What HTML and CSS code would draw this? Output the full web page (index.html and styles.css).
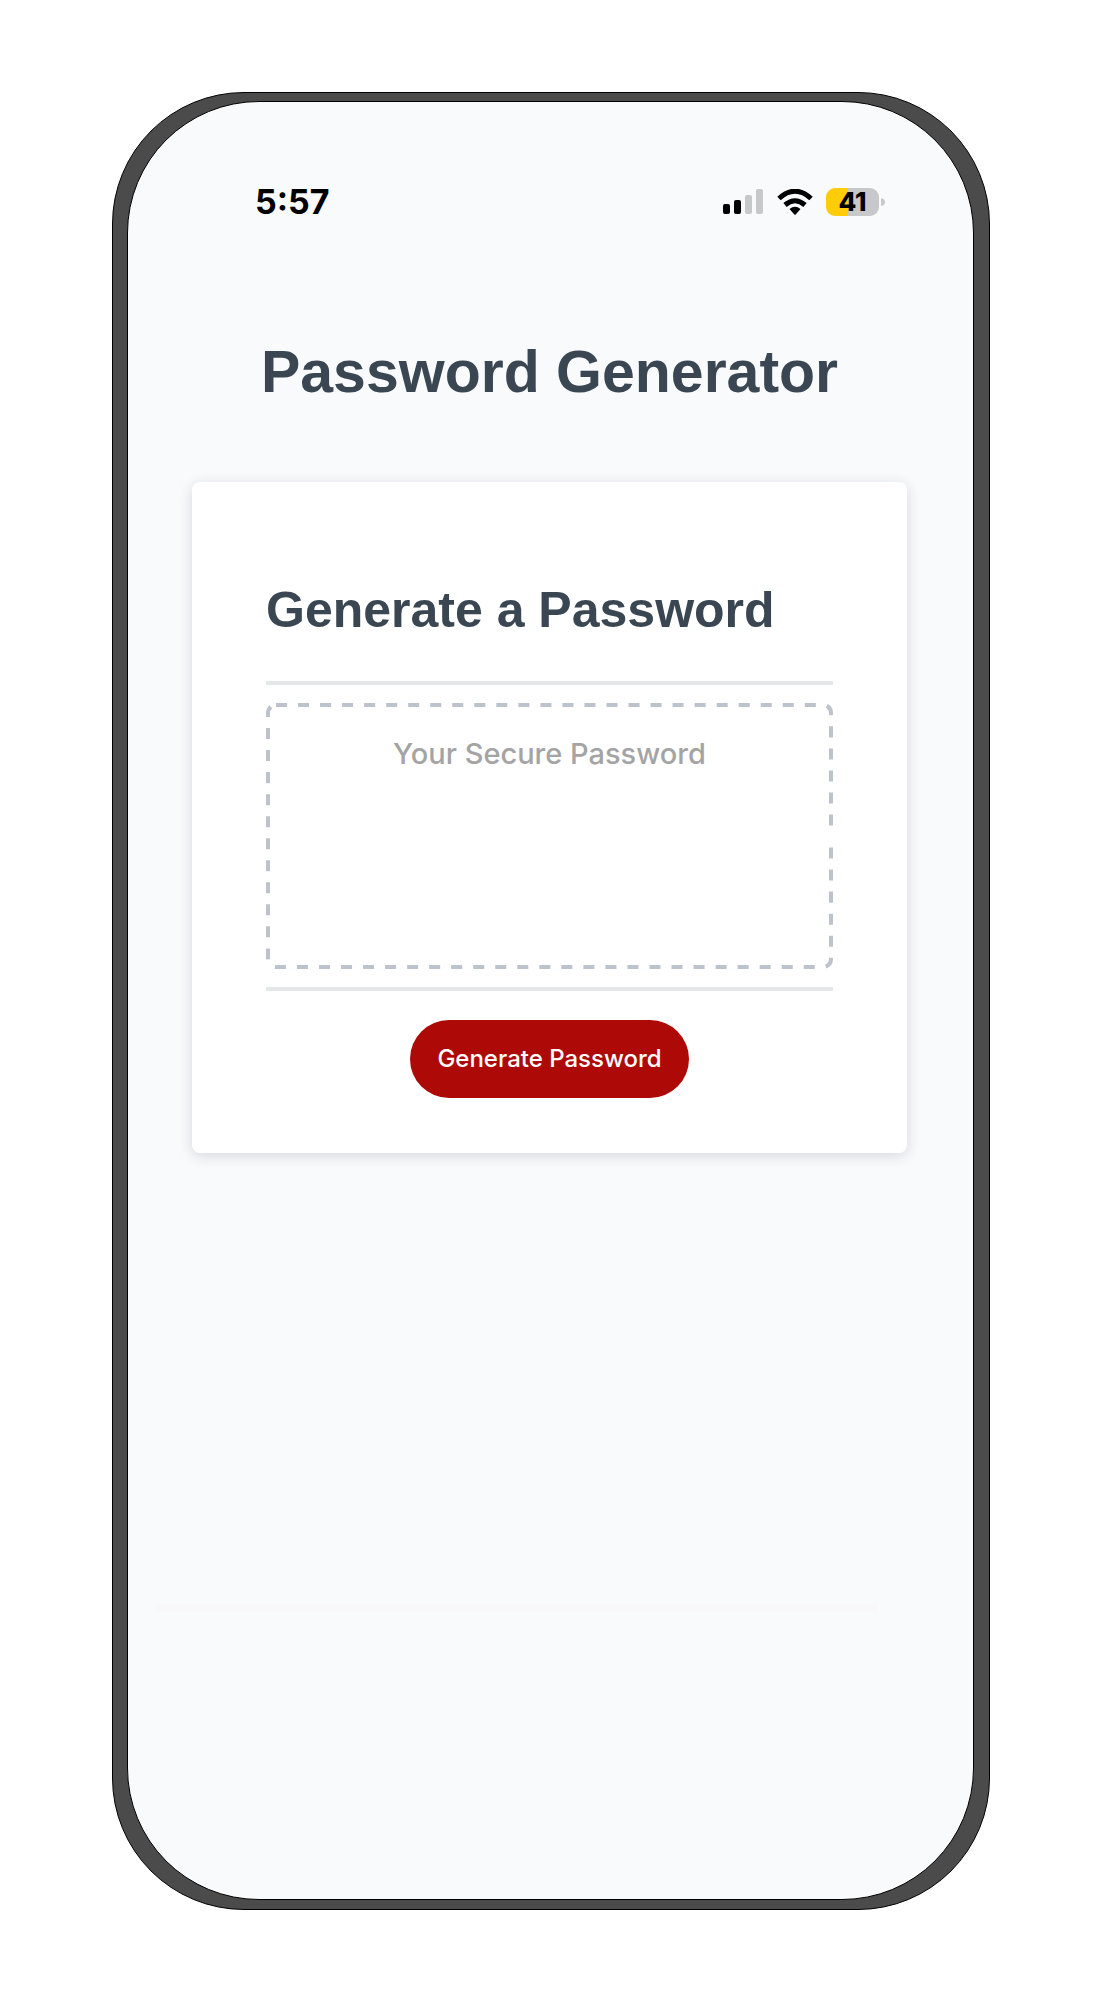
FILE: index.html
```html
<!DOCTYPE html>
<html lang="en">
<head>
<meta charset="utf-8">
<meta name="viewport" content="width=device-width, initial-scale=1">
<title>Password Generator</title>
<link rel="stylesheet" href="styles.css">
</head>
<body>
<div class="phone">
  <div class="screen">
    <div class="status">
      <span class="time">5:57</span>
      <div class="indicators">
        <svg class="signal" width="40" height="26" viewBox="0 0 40 26" aria-hidden="true">
          <rect x="0" y="15" width="7" height="10" rx="2"/>
          <rect x="11" y="11" width="7" height="14" rx="2"/>
          <rect class="dim" x="22" y="6" width="7" height="19" rx="2"/>
          <rect class="dim" x="33" y="0" width="7" height="25" rx="2"/>
        </svg>
        <svg class="wifi" width="36" height="26" viewBox="0 0 36 26" aria-hidden="true">
          <path class="arc" d="M2 9.500Q18 -5 34 9.500"/>
          <path class="arc" d="M8 16Q18 7.500 28 16"/>
          <path d="M12.500 20Q18 15.500 23.500 20L18.700 25.400Q18 26 17.300 25.400Z"/>
        </svg>
        <div class="battery"><span class="level">41</span></div>
        <svg class="tip" width="4" height="8" viewBox="0 0 4 8" aria-hidden="true"><path d="M0 0Q4 1 4 4T0 8Z"/></svg>
      </div>
    </div>
    <main class="content">
      <h1>Password Generator</h1>
      <section class="card">
        <h2><label for="password">Generate a Password</label></h2>
        <div class="panel">
          <div class="field">
            <textarea id="password" placeholder="Your Secure Password" readonly></textarea>
            <svg class="outline" aria-hidden="true"><rect pathLength="297"/></svg>
          </div>
        </div>
        <button class="generate" type="button">Generate Password</button>
      </section>
    </main>
    <hr class="divider">
  </div>
</div>
</body>
</html>
```
FILE: styles.css
```css
* { box-sizing: border-box; }

body {
  margin: 0;
  padding: 92px 110px 90px 112px;
  background: #fff;
  font-family: Inter, sans-serif;
}

.phone {
  padding: 8px 15px 9px 14px;
  border: 1px solid #000;
  border-radius: 132px;
  background: #4b4b4b;
}

.screen {
  min-height: 1799px;
  padding: 80px 0;
  border: 1px solid #000;
  border-radius: 132px;
  background: #f9fafc;
}

.status {
  display: flex;
  align-items: center;
  justify-content: space-between;
  height: 40px;
  padding: 0 88px 0 127px;
}

.time {
  font-size: 34px;
  font-weight: 700;
  line-height: 40px;
}

.indicators {
  display: flex;
  align-items: center;
}

.signal { margin-right: 14px; }
.dim { fill: #c7c8ca; }
.wifi { margin-right: 13px; }
.arc { fill: none; stroke: #000; stroke-width: 5px; }

.battery {
  width: 53px;
  height: 28px;
  border-radius: 9px;
  background: linear-gradient(90deg, #ffcc0a 22px, #c7c8ca 22px);
  text-align: center;
}

.level {
  display: block;
  font-size: 26px;
  font-weight: 800;
  line-height: 28px;
}

.tip { margin-left: 2px; fill: #c7c8ca; }

.content { padding: 0 66px 0 64px; }

h1, h2 {
  margin: 0;
  color: #3a4753;
  font-family: "Liberation Sans", Arial, sans-serif;
  font-weight: 700;
}

h1 {
  padding: 118px 0 78px;
  font-size: 59px;
  line-height: 64px;
  text-align: center;
}

.card {
  display: flex;
  flex-direction: column;
  padding: 96px 74px 55px;
  border-radius: 8px;
  background: #fff;
  box-shadow: 0 3px 14px rgba(30, 40, 50, .16);
}

h2 {
  margin-bottom: 39px;
  font-size: 50px;
  line-height: 64px;
}

.panel {
  padding: 18px 0;
  border-top: 4px solid #e5e6e8;
  border-bottom: 4px solid #e5e6e8;
}

.field {
  position: relative;
  height: 266px;
}

textarea {
  display: block;
  width: 100%;
  height: 100%;
  padding: 33px 20px;
  border: 0;
  background: none;
  font: 500 29px/36px Inter, sans-serif;
  text-align: center;
  resize: none;
}

textarea::placeholder { color: #a4a4a4; opacity: 1; }

.outline {
  position: absolute;
  inset: 0;
  width: 100%;
  height: 100%;
  pointer-events: none;
}

/* Even dashes all round, with one wider gap halfway down the right side. */
.outline rect {
  x: 2px;
  y: 2px;
  width: calc(100% - 4px);
  height: calc(100% - 4px);
  rx: 8px;
  fill: none;
  stroke: #bcc3cc;
  stroke-width: 4px;
  stroke-dasharray:
    2 2 2 2 2 2 2 2 2 2 2 2 2 2 2 2 2 2 2 2
    2 2 2 2 2 2 2 2 2 2 2 2 2 2 2 2 2 2 2 2
    2 2 2 2 2 2 2 2 2 2 2 2 2 2 2 2 2 2 2 2
    2 4
    2 2 2 2 2 2 2 2 2 2 2 2 2 2 2 2 2 2 2 2
    2 2 2 2 2 2 2 2 2 2 2 2 2 2 2 2 2 2 2 2
    2 2 2 2 2 2 2 2 2 2 2 2 2 2 2 2 2 2 2 2
    2 2 2 2 2 2 2 2 2 2 2 2 2 2 2 2 2 2 2 2
    2 2 2 2 2 1;
}

.generate {
  align-self: center;
  margin-top: 29px;
  padding: 0 27px;
  height: 78px;
  border: 0;
  border-radius: 39px;
  background: #ad0907;
  color: #fff;
  font: 500 24px/30px Inter, sans-serif;
}

.divider {
  height: 8px;
  margin: 451px 95px 0 28px;
  border: 0;
  background: #f8f8fa;
}
```
